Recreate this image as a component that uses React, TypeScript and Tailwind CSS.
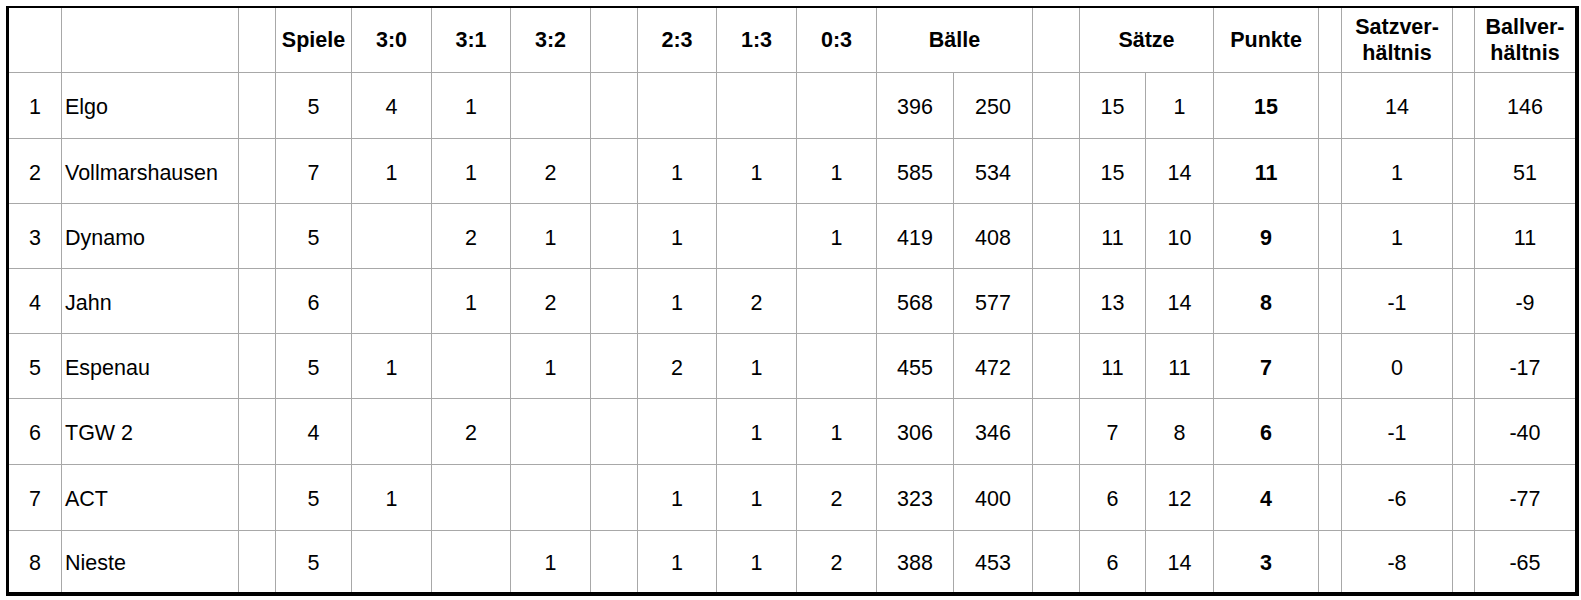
const rows: (string | number)[][] = [
  [1, 'Elgo', '', 5, 4, 1, '', '', '', '', '', 396, 250, '', 15, 1, 15, '', 14, '', 146],
  [2, 'Vollmarshausen', '', 7, 1, 1, 2, '', 1, 1, 1, 585, 534, '', 15, 14, 11, '', 1, '', 51],
  [3, 'Dynamo', '', 5, '', 2, 1, '', 1, '', 1, 419, 408, '', 11, 10, 9, '', 1, '', 11],
  [4, 'Jahn', '', 6, '', 1, 2, '', 1, 2, '', 568, 577, '', 13, 14, 8, '', -1, '', -9],
  [5, 'Espenau', '', 5, 1, '', 1, '', 2, 1, '', 455, 472, '', 11, 11, 7, '', 0, '', -17],
  [6, 'TGW 2', '', 4, '', 2, '', '', '', 1, 1, 306, 346, '', 7, 8, 6, '', -1, '', -40],
  [7, 'ACT', '', 5, 1, '', '', '', 1, 1, 2, 323, 400, '', 6, 12, 4, '', -6, '', -77],
  [8, 'Nieste', '', 5, '', '', 1, '', 1, 1, 2, 388, 453, '', 6, 14, 3, '', -8, '', -65],
];

const cell = 'bg-white flex items-center justify-center';

export default function App() {
  return (
    <div className="bg-white w-[1581px] h-[600px] pt-[6px] pl-[6px]" style={{ fontFamily: '"Liberation Sans", Arial, sans-serif' }}>
      <div className="w-[1573px] border-black border-t-2 border-l-[3px] border-r-[4px] border-b-[4px]">
        <div className="grid gap-px bg-[#a8a8a8] text-black text-[21.5px] grid-cols-[52px_176px_36px_75px_79px_78px_79px_46px_78px_79px_79px_76px_78px_46px_65px_67px_104px_22px_110px_21px_100px] grid-rows-[64px_65px_64px_64px_64px_64px_65px_65px_61px]">
          {/* header */}
          <div className={cell} />
          <div className={cell} />
          <div className={cell} />
          <div className={`${cell} font-bold`}>Spiele</div>
          <div className={`${cell} font-bold`}>3:0</div>
          <div className={`${cell} font-bold`}>3:1</div>
          <div className={`${cell} font-bold`}>3:2</div>
          <div className={cell} />
          <div className={`${cell} font-bold`}>2:3</div>
          <div className={`${cell} font-bold`}>1:3</div>
          <div className={`${cell} font-bold`}>0:3</div>
          <div className={`${cell} col-span-2 font-bold`}>Bälle</div>
          <div className={cell} />
          <div className={`${cell} col-span-2 font-bold`}>Sätze</div>
          <div className={`${cell} font-bold`}>Punkte</div>
          <div className={cell} />
          <div className={`${cell} flex-col font-bold leading-[26px]`}>
            <span>Satzver-</span>
            <span>hältnis</span>
          </div>
          <div className={cell} />
          <div className={`${cell} flex-col font-bold leading-[26px]`}>
            <span>Ballver-</span>
            <span>hältnis</span>
          </div>

          {rows.map((r) =>
            r.map((v, i) => (
              <div
                key={`${r[0]}-${i}`}
                className={
                  i === 1
                    ? 'bg-white flex items-center pl-[3px] pt-[4px]'
                    : i === 16
                      ? `${cell} pt-[4px] font-bold`
                      : `${cell} pt-[4px]`
                }
              >
                {v}
              </div>
            ))
          )}
        </div>
      </div>
    </div>
  );
}
